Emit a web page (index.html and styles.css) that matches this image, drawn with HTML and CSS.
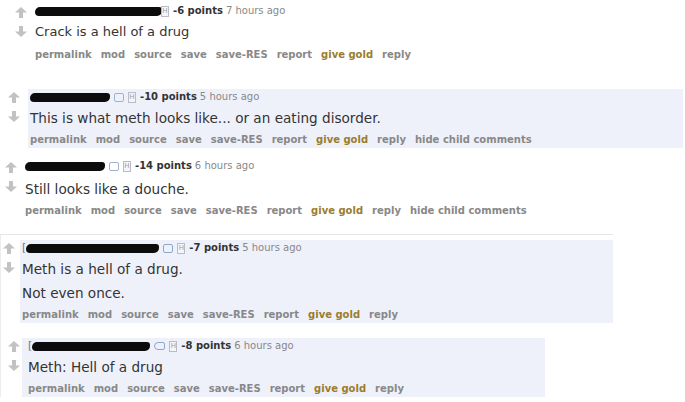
FILE: index.html
```html
<!DOCTYPE html>
<html lang="en">
<head>
    <meta charset="UTF-8">
    <title>Comments</title>
    <link rel="stylesheet" href="styles.css">
</head>
<body>
    <div class="thread">

        <!-- first comment -->
        <div class="comment c1">
            <div class="votes">
                <svg class="arrow" viewBox="0 0 12 11"><path d="M6 0 L12 5.5 L8 5.5 L8 11 L4 11 L4 5.5 L0 5.5 Z"/></svg>
                <svg class="arrow" viewBox="0 0 12 11"><path d="M6 11 L12 5.5 L8 5.5 L8 0 L4 0 L4 5.5 L0 5.5 Z"/></svg>
            </div>
            <div class="entry">
                <p class="tagline">
                    <span class="blob" style="width:127px"></span><span class="hbox tucked">H</span>
                    <b class="score">-6 points</b> <span class="time">7 hours ago</span>
                </p>
                <div class="md"><p>Crack is a hell of a drug</p></div>
                <ul class="flat-list">
                    <li>permalink</li><li>mod</li><li>source</li><li>save</li><li>save-RES</li><li>report</li><li class="gold">give gold</li><li>reply</li>
                </ul>
            </div>
        </div>

        <!-- second comment -->
        <div class="comment c2">
            <div class="votes">
                <svg class="arrow" viewBox="0 0 12 11"><path d="M6 0 L12 5.5 L8 5.5 L8 11 L4 11 L4 5.5 L0 5.5 Z"/></svg>
                <svg class="arrow" viewBox="0 0 12 11"><path d="M6 11 L12 5.5 L8 5.5 L8 0 L4 0 L4 5.5 L0 5.5 Z"/></svg>
            </div>
            <div class="entry boxed">
                <p class="tagline">
                    <span class="blob" style="width:80px"></span><span class="mail"></span><span class="hbox">H</span>
                    <b class="score">-10 points</b> <span class="time">5 hours ago</span>
                </p>
                <div class="md"><p>This is what meth looks like... or an eating disorder.</p></div>
                <ul class="flat-list">
                    <li>permalink</li><li>mod</li><li>source</li><li>save</li><li>save-RES</li><li>report</li><li class="gold">give gold</li><li>reply</li><li>hide child comments</li>
                </ul>
            </div>
        </div>

        <!-- third comment -->
        <div class="comment c3">
            <div class="votes">
                <svg class="arrow" viewBox="0 0 12 11"><path d="M6 0 L12 5.5 L8 5.5 L8 11 L4 11 L4 5.5 L0 5.5 Z"/></svg>
                <svg class="arrow" viewBox="0 0 12 11"><path d="M6 11 L12 5.5 L8 5.5 L8 0 L4 0 L4 5.5 L0 5.5 Z"/></svg>
            </div>
            <div class="entry">
                <p class="tagline">
                    <span class="blob" style="width:80px"></span><span class="mail"></span><span class="hbox">H</span>
                    <b class="score">-14 points</b> <span class="time">6 hours ago</span>
                </p>
                <div class="md"><p>Still looks like a douche.</p></div>
                <ul class="flat-list">
                    <li>permalink</li><li>mod</li><li>source</li><li>save</li><li>save-RES</li><li>report</li><li class="gold">give gold</li><li>reply</li><li>hide child comments</li>
                </ul>
            </div>
        </div>

        <!-- child thread -->
        <div class="child">
            <div class="comment c4">
                <div class="votes">
                    <svg class="arrow" viewBox="0 0 12 11"><path d="M6 0 L12 5.5 L8 5.5 L8 11 L4 11 L4 5.5 L0 5.5 Z"/></svg>
                    <svg class="arrow" viewBox="0 0 12 11"><path d="M6 11 L12 5.5 L8 5.5 L8 0 L4 0 L4 5.5 L0 5.5 Z"/></svg>
                </div>
                <div class="entry boxed">
                    <p class="tagline">
                        <span class="bracket">[</span><span class="blob" style="width:133px"></span><span class="bubble"></span><span class="hbox">H</span>
                        <b class="score">-7 points</b> <span class="time">5 hours ago</span>
                    </p>
                    <div class="md">
                        <p>Meth is a hell of a drug.</p>
                        <p>Not even once.</p>
                    </div>
                    <ul class="flat-list">
                        <li>permalink</li><li>mod</li><li>source</li><li>save</li><li>save-RES</li><li>report</li><li class="gold">give gold</li><li>reply</li>
                    </ul>
                </div>
            </div>

            <div class="comment c5">
                <div class="votes">
                    <svg class="arrow" viewBox="0 0 12 11"><path d="M6 0 L12 5.5 L8 5.5 L8 11 L4 11 L4 5.5 L0 5.5 Z"/></svg>
                    <svg class="arrow" viewBox="0 0 12 11"><path d="M6 11 L12 5.5 L8 5.5 L8 0 L4 0 L4 5.5 L0 5.5 Z"/></svg>
                </div>
                <div class="entry boxed">
                    <p class="tagline">
                        <span class="bracket">[</span><span class="blob" style="width:118px"></span><span class="tag"></span><span class="hbox">H</span>
                        <b class="score">-8 points</b> <span class="time">6 hours ago</span>
                    </p>
                    <div class="md"><p>Meth: Hell of a drug</p></div>
                    <ul class="flat-list">
                        <li>permalink</li><li>mod</li><li>source</li><li>save</li><li>save-RES</li><li>report</li><li class="gold">give gold</li><li>reply</li>
                    </ul>
                </div>
            </div>
        </div>

    </div>
</body>
</html>
```

FILE: styles.css
```css
body {
    margin: 0;
    background: #fff;
    font-family: "DejaVu Sans", Verdana, sans-serif;
    color: #333;
}
.thread {
    width: 685px;
}
.comment {
    display: flex;
    align-items: flex-start;
}
.votes {
    display: flex;
    flex-direction: column;
    gap: 8px;
    padding-top: 3px;
}
.arrow {
    width: 12px;
    height: 11px;
    fill: #c2c2c2;
    display: block;
}
.entry {
    flex: 1;
}
.boxed {
    background: #eff1fa;
    padding: 1px 0 1px 2px;
}
.tagline {
    margin: 0;
    font-size: 10px;
    line-height: 14px;
    height: 14px;
    white-space: nowrap;
    display: flex;
    align-items: center;
    gap: 4px;
}
.blob {
    display: inline-block;
    height: 9px;
    background: #0c0c0c;
    border-radius: 5px 3px 5px 4px;
}
.bracket {
    color: #777;
    font-size: 11px;
    margin-right: -4px;
}
.hbox {
    display: inline-block;
    width: 6px;
    height: 9px;
    border: 1px solid #b9bcc6;
    font-size: 7px;
    line-height: 9px;
    text-align: center;
    color: #9a9ea8;
    background: #f4f5f8;
}
.hbox.tucked {
    margin-left: -5px;
}
.mail {
    display: inline-block;
    width: 8px;
    height: 7px;
    border: 1px solid #9fb0cf;
    border-radius: 2px;
}
.bubble {
    display: inline-block;
    width: 8px;
    height: 7px;
    border: 1px solid #8fa6cf;
    border-radius: 2px;
}
.tag {
    display: inline-block;
    width: 9px;
    height: 6px;
    border: 1px solid #8fa6cf;
    border-radius: 4px 2px 2px 4px;
}
.score {
    color: #333;
    font-weight: bold;
}
.time {
    color: #888;
    margin-left: -1px;
}
.md p {
    margin: 4px 0 0;
    font-size: 13.6px;
    line-height: 20px;
}
.flat-list {
    list-style: none;
    margin: 5px 0 0;
    padding: 0;
    display: flex;
    gap: 9px;
    font-size: 10px;
    line-height: 14px;
    font-weight: bold;
    color: #888;
    white-space: nowrap;
}
.flat-list .gold {
    color: #9a7d2e;
}

/* per-comment placement */
.c1 {
    padding: 4px 0 0 15px;
    gap: 8px;
}
.c1 .md p {
    font-size: 13px;
}
.c1 .flat-list {
    margin-top: 6px;
}
.c2 {
    margin-top: 27px;
    padding-left: 8px;
    gap: 8px;
    width: 675px;
}
.c3 {
    margin-top: 11px;
    padding-left: 5px;
    gap: 8px;
}
.c3 .md p {
    margin-top: 6px;
}
.child {
    margin-top: 16px;
    width: 612px;
    border-top: 1px solid #e6e6e6;
    border-left: 1px solid #ededed;
    padding-top: 5px;
}
.c4 {
    padding-left: 2px;
    gap: 5px;
}
.c5 {
    margin-top: 15px;
    padding-left: 7px;
    gap: 2px;
    width: 537px;
}
.c5 .boxed {
    padding-left: 6px;
}
```
